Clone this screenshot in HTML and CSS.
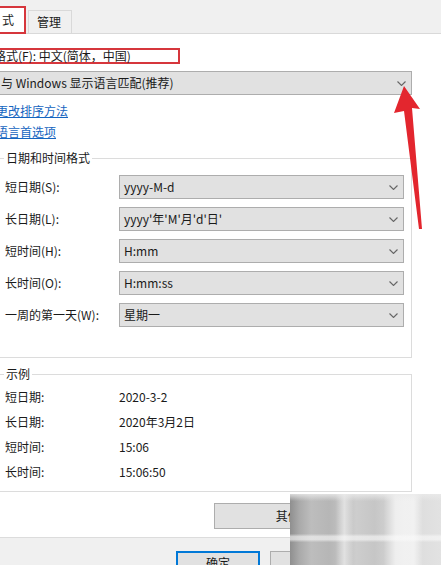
FILE: index.html
```html
<!DOCTYPE html>
<html>
<head>
  <meta charset="UTF-8">
  <title>区域 - 格式</title>
  <link rel="stylesheet" href="styles.css">
</head>
<body>
  <div class="tabs">
    <div class="tab active">式</div>
    <div class="tab">管理</div>
  </div>

  <div class="sheet">
    <div class="fmt"><span class="mark">格式(F): 中文(简体，中国)</span></div>
    <div class="combo wide">
      <span>与 Windows 显示语言匹配(推荐)</span>
      <svg class="chev" viewBox="0 0 9 5"><polyline points="0.5,0.5 4.5,4.5 8.5,0.5"/></svg>
    </div>
    <a class="link" href="#">更改排序方法</a>
    <a class="link" href="#">语言首选项</a>

    <fieldset class="group formats">
      <legend>日期和时间格式</legend>
      <div class="row">
        <label>短日期(S):</label>
        <div class="combo"><span>yyyy-M-d</span><svg class="chev" viewBox="0 0 9 5"><polyline points="0.5,0.5 4.5,4.5 8.5,0.5"/></svg></div>
      </div>
      <div class="row">
        <label>长日期(L):</label>
        <div class="combo"><span>yyyy'年'M'月'd'日'</span><svg class="chev" viewBox="0 0 9 5"><polyline points="0.5,0.5 4.5,4.5 8.5,0.5"/></svg></div>
      </div>
      <div class="row">
        <label>短时间(H):</label>
        <div class="combo"><span>H:mm</span><svg class="chev" viewBox="0 0 9 5"><polyline points="0.5,0.5 4.5,4.5 8.5,0.5"/></svg></div>
      </div>
      <div class="row">
        <label>长时间(O):</label>
        <div class="combo"><span>H:mm:ss</span><svg class="chev" viewBox="0 0 9 5"><polyline points="0.5,0.5 4.5,4.5 8.5,0.5"/></svg></div>
      </div>
      <div class="row">
        <label>一周的第一天(W):</label>
        <div class="combo"><span>星期一</span><svg class="chev" viewBox="0 0 9 5"><polyline points="0.5,0.5 4.5,4.5 8.5,0.5"/></svg></div>
      </div>
    </fieldset>

    <fieldset class="group sample">
      <legend>示例</legend>
      <div class="srow"><span>短日期:</span><span>2020-3-2</span></div>
      <div class="srow"><span>长日期:</span><span>2020年3月2日</span></div>
      <div class="srow"><span>短时间:</span><span>15:06</span></div>
      <div class="srow"><span>长时间:</span><span>15:06:50</span></div>
    </fieldset>

    <div class="more"><button class="btn more-btn">其他设置(D)...</button></div>
  </div>

  <div class="footer">
    <button class="btn primary">确定</button>
    <button class="btn">取消</button>
    <button class="btn">应用(A)</button>
  </div>

  <svg class="arrow" viewBox="0 0 441 565">
    <polygon points="404,86 420,109 412,108 422,229 419,229 404,111 394,113"/>
  </svg>
  <div class="mosaic"></div>
</body>
</html>
```

FILE: styles.css
```css
* { box-sizing: border-box; }
html, body { margin: 0; padding: 0; }
body { width: 441px; height: 565px; overflow: hidden; position: relative; background: #fff; color: #1a1a1a; font: 12px/16px "Noto Sans CJK SC", "Noto Sans", sans-serif; }

/* tab strip */
.tabs { height: 34px; background: #f0f0f0; border-bottom: 1px solid #d9d9d9; display: flex; align-items: flex-end; }
.tab { height: 23px; line-height: 22px; padding: 0 8px; border: 1px solid #d9d9d9; border-bottom: none; background: #f0f0f0; }
.tab.active { width: 30px; height: 28px; margin-left: -4px; margin-bottom: -1px; padding: 0 0 0 4px; line-height: 24px; background: #fff; border: 2px solid #d6363c; }
.tab + .tab { margin-left: 2px; width: 44px; }

/* page */
.sheet { margin-left: -6px; height: 504px; padding-top: 14px; border-bottom: 1px solid #dcdcdc; }
.fmt { height: 16px; }
.mark { display: inline-block; margin-left: -2px; width: 188px; height: 16px; line-height: 12px; border: 2px solid #d6363c; white-space: nowrap; }

.combo { height: 24px; line-height: 22px; padding: 0 5px 0 4px; background: #e1e1e1; border: 1px solid #adadad; display: flex; align-items: center; justify-content: space-between; white-space: nowrap; }
.combo.wide { margin: 7px 0 0 2px; width: 416px; }
.chev { width: 9px; height: 5px; flex: none; }
.chev polyline { fill: none; stroke: #666; stroke-width: 1.1; }

.link { display: block; width: fit-content; margin-left: 2px; line-height: 21px; color: #1565c0; text-decoration: underline; }
.link:first-of-type { margin-top: 5px; }

.group { margin: 8px 0 0 2px; width: 416px; border: 1px solid #dcdcdc; padding: 9px 0 30px 7px; min-inline-size: auto; }
.group legend { padding: 0 2px; line-height: 16px; }
.row { display: flex; align-items: center; }
.row + .row { margin-top: 8px; }
.row label { width: 115px; padding-left: 1px; }
.row .combo { width: 285px; }

.sample { padding: 2px 0 7px 7px; }
.srow { display: flex; line-height: 25px; }
.srow span:first-child { width: 115px; padding-left: 1px; }

.more { width: 418px; margin-top: 11px; display: flex; justify-content: flex-end; }

/* buttons */
.btn { font: inherit; color: #1a1a1a; height: 26px; background: #e1e1e1; border: 1px solid #adadad; padding: 0; }
.more-btn { width: 198px; }
.footer { background: #f0f0f0; height: 28px; padding: 13px 0 0 176px; display: flex; gap: 10px; }
.footer .btn { width: 84px; height: 24px; flex: none; }
.footer .primary { border: 1px solid #0078d7; box-shadow: inset 0 0 0 1px #0078d7; }

/* annotation arrow */
.arrow { position: absolute; left: 0; top: 0; width: 441px; height: 565px; pointer-events: none; }
.arrow polygon { fill: #e3262e; }

/* blurred corner */
.mosaic { position: absolute; left: 290px; top: 494px; width: 151px; height: 71px;
  background:
    linear-gradient(to bottom, rgba(235,235,235,.8) 0, rgba(235,235,235,0) 10%, rgba(255,255,255,0) 56%, rgba(250,250,250,.6) 60%, rgba(250,250,250,.6) 64%, rgba(255,255,255,0) 68%),
    linear-gradient(to right, rgba(0,0,0,0) 0, rgba(0,0,0,0) 30%, rgba(255,255,255,.5) 36%, rgba(0,0,0,0) 42%, rgba(0,0,0,0) 62%, rgba(255,255,255,.6) 70%, rgba(255,255,255,.6) 82%, rgba(0,0,0,0) 88%),
    linear-gradient(to right, #8f8f8f 0, #a9a9a9 6%, #bdbdbd 14%, #b6b6b6 26%, #cdcdcd 44%, #c6c6c6 56%, #dadada 74%, #e2e2e2 100%); }
```
